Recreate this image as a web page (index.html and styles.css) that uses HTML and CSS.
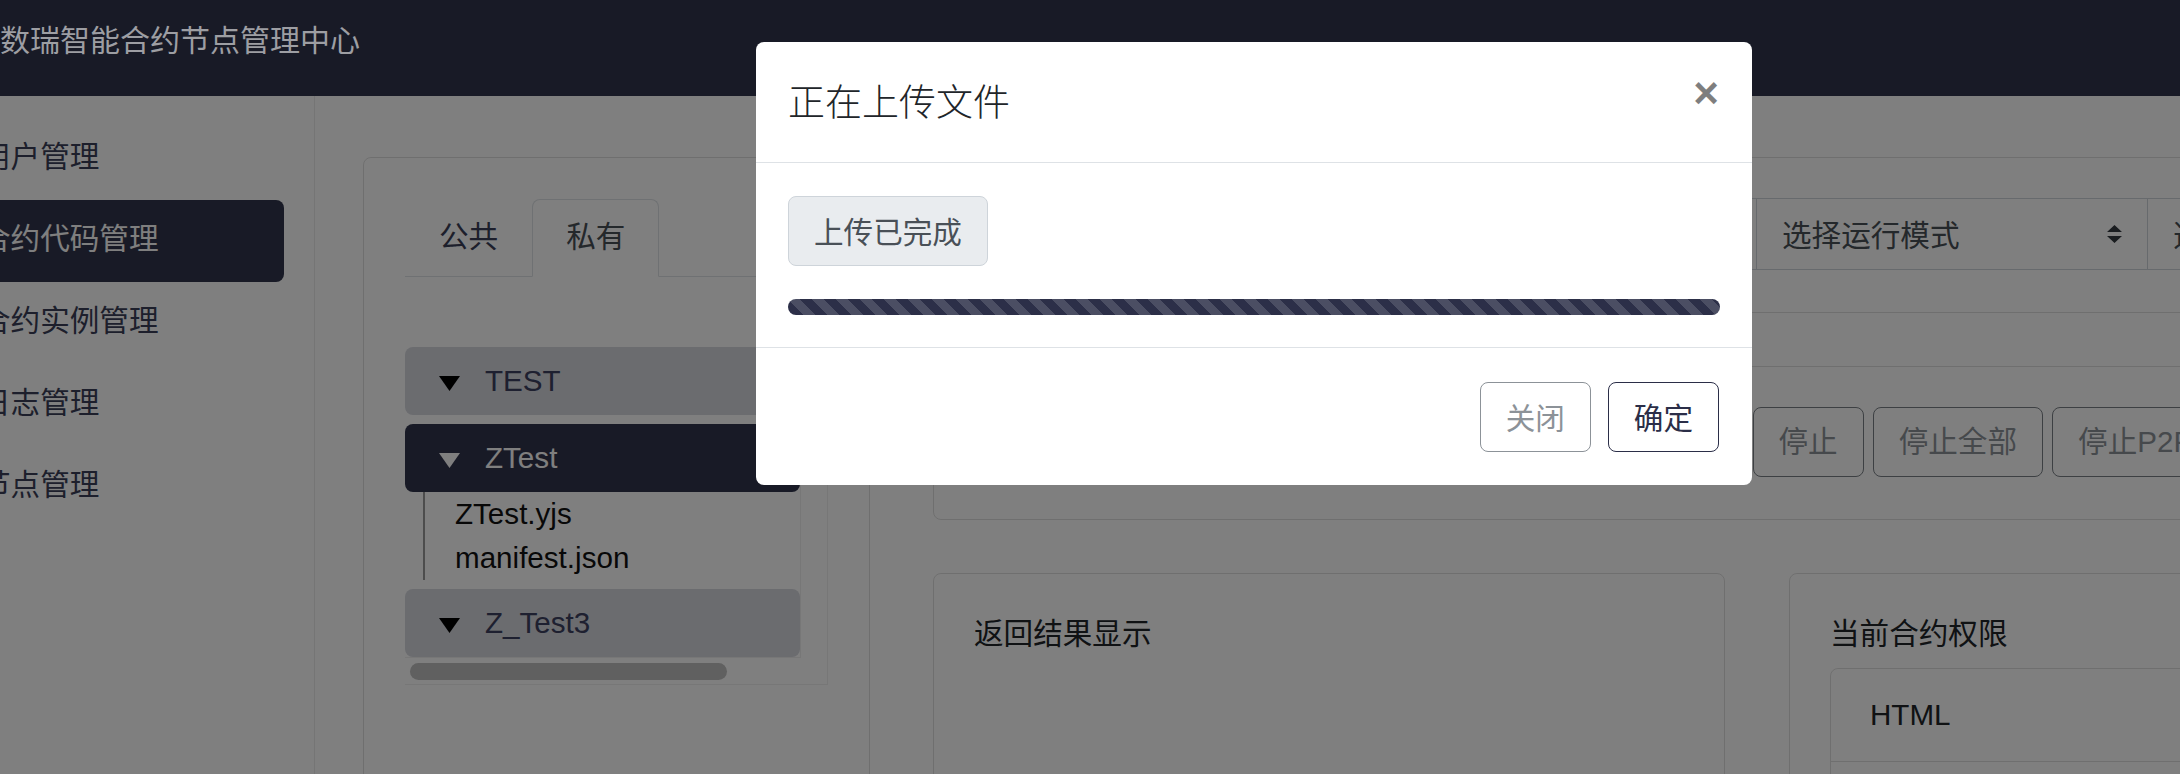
FILE: index.html
```html
<!DOCTYPE html>
<html lang="zh-CN">
<head>
    <meta charset="UTF-8">
    <meta name="viewport" content="width=device-width, initial-scale=1.0">
    <title>数瑞智能合约节点管理中心</title>
    <link rel="stylesheet" href="styles.css">
</head>

<body>
    <header class="navbar">
        <span class="brand">数瑞智能合约节点管理中心</span>
    </header>

    <div class="layout">
        <aside class="sidebar">
            <ul class="side-nav">
                <li class="side-item">用户管理</li>
                <li class="side-item active">合约代码管理</li>
                <li class="side-item">合约实例管理</li>
                <li class="side-item">日志管理</li>
                <li class="side-item">节点管理</li>
            </ul>
        </aside>

        <main class="main">
            <section class="card files-card">
                <div class="files-body">
                    <ul class="tabs">
                        <li class="tab">公共</li>
                        <li class="tab active">私有</li>
                    </ul>

                    <div class="tab-content">
                        <div class="tree-box">
                            <div class="tree">
                                <div class="tree-node">
                                    <div class="tree-row">
                                        <svg class="caret" width="21" height="15" viewBox="0 0 21 15"><path d="M0 0H21L10.5 15Z"/></svg>TEST
                                    </div>
                                </div>
                                <div class="tree-node">
                                    <div class="tree-row selected">
                                        <svg class="caret" width="21" height="15" viewBox="0 0 21 15"><path d="M0 0H21L10.5 15Z"/></svg>ZTest
                                    </div>
                                    <ul class="tree-children">
                                        <li>ZTest.yjs</li>
                                        <li>manifest.json</li>
                                    </ul>
                                </div>
                                <div class="tree-node">
                                    <div class="tree-row">
                                        <svg class="caret" width="21" height="15" viewBox="0 0 21 15"><path d="M0 0H21L10.5 15Z"/></svg>Z_Test3
                                    </div>
                                </div>
                            </div>
                            <div class="scroll-thumb"></div>
                        </div>
                    </div>
                </div>
            </section>

            <div class="work">
                <section class="card">
                    <div class="card-body">
                        <div class="select-group">
                            <div class="select">选择合约
                                <svg width="15" height="18" viewBox="0 0 15 18"><path d="M7.5 0L15 7H0Z M0 11H15L7.5 18Z"/></svg>
                            </div>
                            <div class="select">选择节点
                                <svg width="15" height="18" viewBox="0 0 15 18"><path d="M7.5 0L15 7H0Z M0 11H15L7.5 18Z"/></svg>
                            </div>
                            <div class="select">选择运行模式
                                <svg width="15" height="18" viewBox="0 0 15 18"><path d="M7.5 0L15 7H0Z M0 11H15L7.5 18Z"/></svg>
                            </div>
                            <div class="select">选择执行方式
                                <svg width="15" height="18" viewBox="0 0 15 18"><path d="M7.5 0L15 7H0Z M0 11H15L7.5 18Z"/></svg>
                            </div>
                        </div>
                    </div>
                </section>

                <section class="card">
                    <div class="card-body btn-row">
                        <button class="btn">上传文件</button>
                        <button class="btn">导出文件</button>
                        <button class="btn">删除</button>
                        <button class="btn">启动</button>
                        <button class="btn">启动全部</button>
                        <button class="btn">停止</button>
                        <button class="btn">停止全部</button>
                        <button class="btn">停止P2P节点</button>
                    </div>
                </section>

                <div class="result-grid">
                    <section class="card result-card">
                        <div class="card-body">
                            <h6 class="card-title">返回结果显示</h6>
                        </div>
                    </section>
                    <section class="card result-card">
                        <div class="card-body">
                            <h6 class="card-title">当前合约权限</h6>
                            <ul class="list-group">
                                <li class="list-item">HTML</li>
                                <li class="list-item">FileSystem</li>
                            </ul>
                        </div>
                    </section>
                </div>
            </div>
        </main>
    </div>

    <div class="backdrop"></div>

    <div class="modal">
        <div class="modal-header">
            <h5 class="modal-title">正在上传文件</h5>
            <button class="close" type="button">&times;</button>
        </div>
        <div class="modal-body">
            <span class="status">上传已完成</span>
            <div class="progress"></div>
        </div>
        <div class="modal-footer">
            <button class="btn btn-muted" type="button">关闭</button>
            <button class="btn btn-dark" type="button">确定</button>
        </div>
    </div>
</body>
</html>
```

FILE: styles.css
```css
* {
    box-sizing: border-box;
}

body {
    margin: 0;
    width: 2180px;
    height: 774px;
    overflow: hidden;
    background: #fff;
    font-family: "Noto Sans CJK SC", "Liberation Sans", sans-serif;
    font-size: 29.6px;
    line-height: 44px;
    color: #212529;
}

.navbar {
    position: relative;
    z-index: 20;
    height: 96px;
    padding-top: 16px;
    background: #181a26;
}

.brand {
    font-size: 30px;
    line-height: 45px;
    color: #9d9ea3;
}

.layout {
    display: flex;
    min-height: 678px;
}

/* sidebar */
.sidebar {
    flex: none;
    width: 315px;
    padding-top: 22px;
    border-right: 1px solid #ebebeb;
}

.side-nav {
    list-style: none;
    margin: 0 30px 0 -40px;
    padding: 0;
}

.side-item {
    padding: 15px 0 23px 21px;
    border-radius: 8px;
    color: #3a3e58;
}

.side-item.active {
    background: #30344c;
    color: #fff;
}

/* main area */
.main {
    display: flex;
    align-items: flex-start;
    gap: 63px;
    padding: 61px 0 0 48px;
}

.card {
    background: #fff;
    border: 1px solid #dfdfdf;
    border-radius: 8px;
}

.card-body {
    padding: 40px 40px 42px;
}

.files-card {
    flex: none;
    width: 507px;
    min-height: 700px;
}

.files-body {
    padding: 41px;
}

.tabs {
    display: flex;
    list-style: none;
    margin: 0;
    padding: 0;
    border-bottom: 1px solid #dee2e6;
}

.tab {
    padding: 13px 33px 19px;
    margin-bottom: -1px;
    border: 1px solid transparent;
    border-radius: 8px 8px 0 0;
    color: #3a3e58;
}

.tab.active {
    background: #fff;
    border-color: #dee2e6 #dee2e6 #fff;
    color: #495057;
}

.tab-content {
    padding-top: 70px;
}

.tree-box {
    padding-bottom: 4px;
    border-right: 1px solid #eee;
    border-bottom: 1px solid #eee;
    font-family: "Liberation Sans", "Noto Sans CJK SC", sans-serif;
}

.tree {
    width: 396px;
    border-right: 1px solid #eee;
    border-bottom: 1px solid #eee;
}

.tree-node + .tree-node {
    margin-top: 9px;
}

.tree-row {
    padding: 12px 0 12px 34px;
    border-radius: 8px;
    background: #d6d8df;
    color: #3c4060;
}

.tree-row.selected {
    background: #30344c;
    color: #fff;
}

.caret {
    margin-right: 25px;
    fill: #000;
}

.tree-row.selected .caret {
    fill: #fff;
}

.tree-children {
    list-style: none;
    margin: 0 0 0 18px;
    padding: 0 0 0 30px;
    border-left: 2px solid #9a9a9a;
    color: #111;
}

.scroll-thumb {
    width: 317px;
    height: 17px;
    margin: 5px 0 0 5px;
    border-radius: 9px;
    background: #c0c0c0;
}

/* right column */
.work {
    flex: none;
    width: 1648px;
    display: flex;
    flex-direction: column;
    gap: 53px;
}

.select-group {
    display: flex;
}

.select {
    flex: none;
    width: 392px;
    display: flex;
    justify-content: space-between;
    align-items: center;
    padding: 13px 25px;
    border: 1px solid #ced4da;
    color: #495057;
    fill: #343a40;
}

.select + .select {
    margin-left: -1px;
}

.select:first-child {
    border-radius: 8px 0 0 8px;
}

.btn-row {
    display: flex;
    gap: 9px;
}

.btn {
    flex: none;
    padding: 12px 25px;
    border: 1px solid #7b8187;
    border-radius: 8px;
    background: #fff;
    color: #8d9399;
    font: inherit;
    line-height: 44px;
    white-space: nowrap;
    font-family: "Liberation Sans", "Noto Sans CJK SC", sans-serif;
}

.result-grid {
    display: grid;
    grid-template-columns: 792px 792px;
    gap: 64px;
}

.result-card {
    min-height: 320px;
}

.card-title {
    margin: -4px 0 14px;
    font-size: 29.6px;
    font-weight: 400;
    line-height: 44px;
    color: #212529;
}

.list-group {
    list-style: none;
    margin: 0;
    padding: 0;
    border: 1px solid #dfdfdf;
    border-radius: 8px;
}

.list-item {
    padding: 24px 39px;
    font-family: "Liberation Sans", "Noto Sans CJK SC", sans-serif;
}

.list-item + .list-item {
    border-top: 1px solid #dfdfdf;
}

/* modal */
.backdrop {
    position: fixed;
    inset: 0;
    z-index: 10;
    background: rgba(0, 0, 0, 0.5);
}

.modal {
    position: fixed;
    top: 42px;
    left: 756px;
    z-index: 30;
    width: 996px;
    background: #fff;
    border-radius: 8px;
}

.modal-header {
    display: flex;
    justify-content: space-between;
    align-items: flex-start;
    padding: 32px 33px 32px 32px;
    border-bottom: 1px solid #dee2e6;
}

.modal-title {
    margin: -2px 0 2px;
    font-size: 37px;
    font-weight: 300;
    line-height: 56px;
    color: #212529;
}

.close {
    margin-top: -3px;
    padding: 0;
    border: 0;
    background: none;
    font-family: "Liberation Sans", sans-serif;
    font-size: 44px;
    font-weight: 700;
    line-height: 1;
    color: #000;
    opacity: 0.5;
}

.modal-body {
    padding: 33px 32px 32px;
}

.status {
    display: inline-block;
    padding: 12px 25px;
    border: 1px solid #ced4da;
    border-radius: 8px;
    background: #e9ecef;
    color: #495057;
}

.progress {
    height: 16px;
    margin-top: 33px;
    border-radius: 8px;
    background-color: #2c2f48;
    background-image: linear-gradient(45deg, rgba(255, 255, 255, 0.15) 25%, transparent 25%, transparent 50%, rgba(255, 255, 255, 0.15) 50%, rgba(255, 255, 255, 0.15) 75%, transparent 75%, transparent);
    background-size: 24px 24px;
}

.modal-footer {
    display: flex;
    justify-content: flex-end;
    gap: 17px;
    padding: 34px 33px 33px;
    border-top: 1px solid #dee2e6;
}

.btn-muted {
    border-color: #8c9298;
    color: #8c9298;
    font-family: "Noto Sans CJK SC", sans-serif;
}

.btn-dark {
    border-color: #2b2e48;
    color: #2b2e48;
    font-family: "Noto Sans CJK SC", sans-serif;
}
```
